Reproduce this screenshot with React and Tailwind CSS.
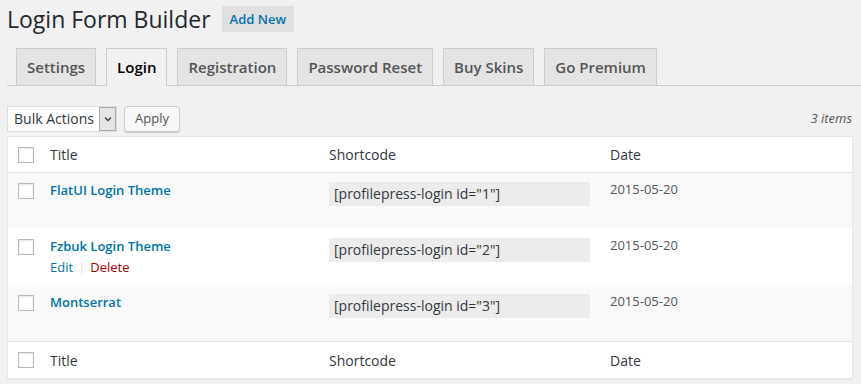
import React from 'react';

const tabs = ['Settings', 'Login', 'Registration', 'Password Reset', 'Buy Skins', 'Go Premium'];

const rows = [
  { id: 1, title: 'FlatUI Login Theme', alt: true },
  { id: 2, title: 'Fzbuk Login Theme', alt: false, actions: true },
  { id: 3, title: 'Montserrat', alt: true },
];

function Check() {
  return (
    <span className="block w-4 h-4 border border-[#b4b9be] bg-white shadow-[inset_0_1px_2px_rgba(0,0,0,0.1)]" />
  );
}

function HeadRow({ top }) {
  return (
    <div className={`flex items-center text-[14px] text-[#32373c] ${top ? 'h-[36px] border-b border-[#e1e1e1]' : 'h-[37px] border-t border-[#e1e1e1]'}`}>
      <div className="w-[32px] pl-[10px] shrink-0"><Check /></div>
      <div className="w-[279px] pl-[10px] shrink-0">Title</div>
      <div className="w-[281px] pl-[10px] shrink-0">Shortcode</div>
      <div className="flex-1 pl-[10px]">Date</div>
    </div>
  );
}

export default function App() {
  return (
    <div className="min-h-[384px] w-[861px] bg-[#f1f1f1] text-[#444] font-['Open_Sans',sans-serif] overflow-hidden">
      {/* Heading */}
      <div className="flex items-center pl-[7px] pt-[4px] h-[34px]">
        <h1 className="text-[23px] leading-[29px] font-normal text-[#23282d]">Login Form Builder</h1>
        <a className="ml-[11px] bg-[#e0e0e0] text-[#0073aa] text-[13px] font-semibold px-[8px] h-[26px] leading-[26px]">Add New</a>
      </div>

      {/* Tabs */}
      <div className="mt-[14px] ml-[7px] border-b border-[#ccc] flex pl-[9px] gap-[10px] h-[38px]">
        {tabs.map((t) => (
          <div
            key={t}
            className={`border border-[#ccc] border-b-0 px-[10px] pt-[6px] text-[15px] font-semibold leading-[24px] ${
              t === 'Login' ? 'bg-[#f1f1f1] text-black h-[38px]' : 'bg-[#e4e4e4] text-[#555] h-[37px]'
            }`}
          >
            {t}
          </div>
        ))}
      </div>

      {/* Bulk actions */}
      <div className="flex items-center mt-[20px] px-[7px] h-[26px]">
        <div className="flex items-stretch h-[26px] w-[110px] bg-white border border-[#ddd]">
          <span className="flex-1 pl-[6px] text-[14px] leading-[24px] text-[#32373c]">Bulk Actions</span>
          <span className="w-[17px] bg-[#e5e5e5] border border-[#a9a9a9] flex items-center justify-center">
            <svg width="8" height="6" viewBox="0 0 8 6"><path d="M1 1.5 L4 4.5 L7 1.5" stroke="#444" strokeWidth="1.5" fill="none" /></svg>
          </span>
        </div>
        <button className="ml-[7px] h-[26px] px-[10px] text-[13px] text-[#555] bg-[#f7f7f7] border border-[#ccc] rounded-[3px] shadow-[0_1px_0_#ccc]">Apply</button>
        <span className="ml-auto mr-[2px] text-[13px] italic text-[#555]">3 items</span>
      </div>

      {/* Table */}
      <div className="mt-[4px] ml-[7px] w-[846px] bg-white border border-[#e5e5e5] shadow-[0_1px_1px_rgba(0,0,0,0.04)]">
        <HeadRow top />
        {rows.map((r) => (
          <div key={r.id} className={`flex h-[56px] ${r.alt ? 'bg-[#f9f9f9]' : 'bg-white'}`}>
            <div className="w-[32px] pl-[10px] pt-[10px] shrink-0"><Check /></div>
            <div className="w-[279px] pl-[10px] pt-[8px] shrink-0">
              <div className="text-[13px] font-semibold leading-[19px] text-[#0073aa]">{r.title}</div>
              {r.actions && (
                <div className="mt-[2px] text-[13px] leading-[18px]">
                  <span className="text-[#0073aa]">Edit</span>
                  <span className="text-[#ddd] mx-[5px]">|</span>
                  <span className="text-[#a00]">Delete</span>
                </div>
              )}
            </div>
            <div className="w-[281px] pl-[10px] pt-[9px] shrink-0">
              <div className="w-[261px] h-[24px] bg-[#ececec] pl-[5px] text-[14px] leading-[24px] text-[#32373c]">
                [profilepress-login id="{r.id}"]
              </div>
            </div>
            <div className="flex-1 pl-[10px] pt-[7px] text-[13px] leading-[19px] text-[#555]">2015-05-20</div>
          </div>
        ))}
        <HeadRow />
      </div>
    </div>
  );
}
